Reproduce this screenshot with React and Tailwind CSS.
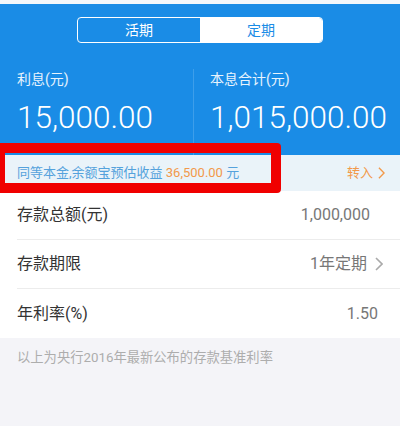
import React, { useState } from "react";

const font = { fontFamily: '"Roboto", "Noto Sans CJK SC", sans-serif' };

function Chevron({ className }) {
  return (
    <svg viewBox="0 0 8 14" className={className} fill="none" stroke="currentColor" strokeWidth="1.6">
      <path d="M1 1l6 6-6 6" />
    </svg>
  );
}

function Row({ label, value, chevron, last, pr }) {
  return (
    <div className="pl-[17px] bg-white">
      <div className={`flex items-center justify-between h-[49px] ${pr} ${last ? "" : "border-b border-[#ececec]"}`}>
        <span className="text-[16px] text-[#333]">{label}</span>
        <span className="flex items-center gap-[8px] text-[16px] text-[#777]">
          {value}
          {chevron && <Chevron className="w-[8px] h-[14px] text-[#aaa]" />}
        </span>
      </div>
    </div>
  );
}

export default function App() {
  const [tab, setTab] = useState("定期");

  return (
    <div className="relative w-full h-[426px] bg-[#f4f4f8] overflow-hidden" style={font}>
      <div className="h-[4px] bg-[#f3f7fb]" />

      {/* blue header */}
      <div className="bg-[#1a8ce6] pt-[13px]">
        <div className="mx-auto flex w-[246px] h-[26px] rounded-[4px] border border-white overflow-hidden">
          {["活期", "定期"].map((t) => (
            <button
              key={t}
              onClick={() => setTab(t)}
              className={`flex-1 text-[14px] leading-none ${
                tab === t ? "bg-white text-[#1a8ce6]" : "bg-transparent text-white"
              }`}
            >
              {t}
            </button>
          ))}
        </div>

        <div className="mt-[26px] flex h-[86px]">
          <div className="w-[193px] pl-[17px]">
            <div className="text-[14px] leading-[20px] text-white/90">利息(元)</div>
            <div className="mt-[10px] text-[31.5px] leading-[38px] font-light text-white">15,000.00</div>
          </div>
          <div className="flex-1 pl-[16px] border-l border-[#3d9eea]">
            <div className="text-[14px] leading-[20px] text-white/90">本息合计(元)</div>
            <div className="mt-[10px] text-[31.5px] leading-[38px] font-light text-white">1,015,000.00</div>
          </div>
        </div>
      </div>

      {/* yuebao hint */}
      <div className="flex items-center justify-between h-[36px] bg-[#eaf3f9] pl-[17px] pr-[15px] text-[13px]">
        <span className="text-[#55a2dc]">
          同等本金,余额宝预估收益 <span className="text-[#f2994a]">36,500.00</span> 元
        </span>
        <span className="flex items-center gap-[5px] text-[#f2994a]">
          转入
          <Chevron className="w-[7px] h-[12px]" />
        </span>
      </div>

      <Row label="存款总额(元)" value="1,000,000" pr="pr-[30px]" />
      <Row label="存款期限" value="1年定期" chevron pr="pr-[17px]" />
      <Row label="年利率(%)" value="1.50" last pr="pr-[22px]" />

      <div className="pl-[17px] pt-[10px] text-[13.3px] text-[#adadad]">
        以上为央行2016年最新公布的存款基准利率
      </div>

      {/* red annotation box */}
      <div className="absolute left-[-5px] top-[143px] w-[286px] h-[50px] border-[10px] border-[#f00000] rounded-[4px] pointer-events-none" />
    </div>
  );
}
